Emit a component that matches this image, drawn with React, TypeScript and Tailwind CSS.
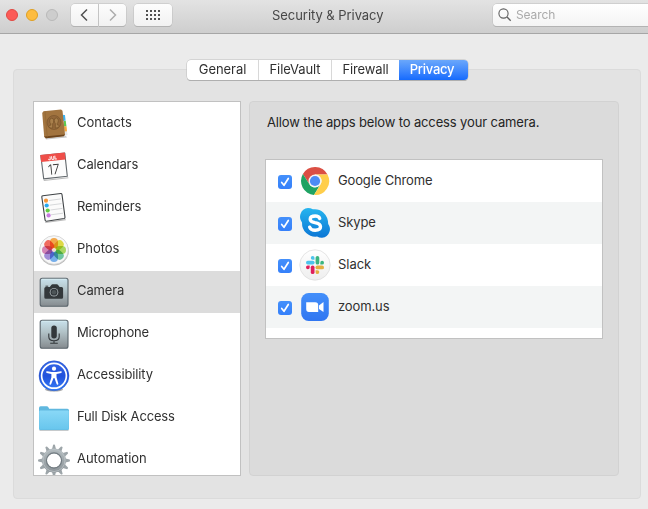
import React from "react";

type Item = { label: string; icon: React.ReactNode; tracking: string };

function Contacts() {
  return (
    <svg viewBox="0 0 32 32" className="size-8">
      <path d="M7 30 28 28 29 29.5 8 31.5z" fill="#c9c9c9" />
      <path d="M23 4 27 8 29.5 27 26 28z" fill="#e6e6e6" />
      <path d="M25 7h2l.5 5.5-2.500.500z" fill="#3fb4f2" />
      <path d="m26 13 1.700-.200.700 5.500-2.400.200z" fill="#5fc94e" />
      <path d="m26 18.500 2.400-.200.600 5-2.500.200z" fill="#f7a93d" />
      <path d="m4.200 5 1.300-1.800L23 1.500l1.500 1.300L27 26.500l-1.300 1.600L8 30.300 6.200 29z" fill="#a2743f" />
      <path d="m6.200 28.500 20.700-2-.9 1.700L8 30.300z" fill="#6d451d" />
      <path d="m7 3.200 2.300 26" stroke="#8f6431" strokeWidth=".6" />
      <circle cx="16" cy="14.500" r="7" fill="#94683a" stroke="#7d582e" strokeWidth=".8" />
      <g fill="#a9804c" stroke="#745027" strokeWidth=".7">
        <path d="M10.500 18.800q.5-1.300 2.300-1.700v-1.400q-1.200-1-1.100-3 .1-2.500 2-2.500t2 2.500q.1 2-1 3v4.500q-2.700-.1-4.200-1.400z" />
        <path d="M17.300 20.200v-4.800q-1.100-1-1-3 .1-2.500 2-2.500t2 2.500q.1 2-1 3v1.400q1.600.3 2.300 1.400-1.400 1.600-4.300 2z" />
      </g>
    </svg>
  );
}

function Calendar() {
  return (
    <svg viewBox="0 0 32 32" className="size-8">
      <path d="m5.500 30 24.700-2.700.3 1L6 31z" fill="#bbb" />
      <path d="m2.800 5.500 24-2.400 2.500 23.200-23.600 2.600z" fill="#fcfcfc" stroke="#62686c" strokeWidth="1.100" strokeLinejoin="round" />
      <path d="m2.300 4.900 24.500-2.500.8 7.200L3.100 12z" fill="#ef4e49" />
      <g transform="rotate(-6 16 16)" textAnchor="middle" fontFamily="Inter, sans-serif">
        <text x="15.500" y="9.700" fontSize="5" fontWeight="800" fill="#fff" textLength="9" lengthAdjust="spacingAndGlyphs">JUL</text>
        <text x="15.500" y="24.300" fontSize="14" fontWeight="300" fill="#343434" textLength="12" lengthAdjust="spacingAndGlyphs">17</text>
      </g>
    </svg>
  );
}

function Reminders() {
  return (
    <svg viewBox="0 0 32 32" className="size-8">
      <path d="m7 30 20.500-3 .3 1.200L7.500 31z" fill="#bbb" />
      <path d="M4.800 3.700 22.700 1.500q1.100-.100 1.300 1L27 25.200q.100 1.100-1 1.300L8.500 29.200q-1.200.1-1.400-1L3.800 5q-.1-1.100 1-1.300z" fill="#fbfbfb" stroke="#3f4346" strokeWidth="1.100" />
      <g stroke="#c6c9cb" strokeWidth=".7"><path d="m11 8.500 12-1.600M11.600 13.200l12-1.600M12.400 18l12-1.600M13 22.800l12-1.600" /></g>
      <circle cx="8" cy="8.700" r="2.100" fill="#f79536" /><circle cx="8.700" cy="13.500" r="2.100" fill="#28a9ef" /><circle cx="9.700" cy="18.500" r="2.100" fill="#63cd43" /><circle cx="10.600" cy="23.400" r="2.100" fill="#c77be0" />
    </svg>
  );
}

const petals: [number, string][] = [[0, "#f9a233"], [45, "#e2dc2d"], [90, "#a4d850"], [135, "#5fc49a"], [180, "#67aaf0"], [225, "#9a83d9"], [270, "#d576b0"], [315, "#f75a4c"]];

function Photos() {
  return (
    <svg viewBox="0 0 32 32" className="size-8">
      <ellipse cx="16" cy="17" rx="14.800" ry="14.600" fill="#bdbdbd" />
      <circle cx="16" cy="16" r="14.300" fill="#f7f7f7" stroke="#d0d0d0" strokeWidth=".8" />
      {petals.map(([a, c]) => (
        <rect key={a} x="12" y="4" width="8" height="10.400" rx="4" fill={c} fillOpacity=".88" transform={`rotate(${a} 16 16)`} style={{ mixBlendMode: "multiply" }} />
      ))}
      <circle cx="16" cy="16" r="1.700" fill="#f4d8cc" />
    </svg>
  );
}

function Tile({ children }: { children: React.ReactNode }) {
  return (
    <svg viewBox="0 0 32 32" className="size-8">
      <defs><linearGradient id="tile" x2="0" y2="1"><stop stopColor="#c9e2ed" /><stop offset=".4" stopColor="#b3c4c9" /><stop offset="1" stopColor="#858b8f" /></linearGradient></defs>
      <rect x="2.200" y="2.200" width="27.800" height="28" rx="2" fill="url(#tile)" stroke="#59646b" strokeWidth="1.100" />
      <path d="M4 3.300h24" stroke="#ddf1f7" strokeWidth=".6" />
      {children}
    </svg>
  );
}

function Camera() {
  return (
    <Tile>
      <path d="M7.500 11h4l1.500-2q.5-.7 1.300-.7h4.200q.8 0 1.300.7l1.500 2h2q1.500 0 1.500 1.500v8.700q0 1.500-1.500 1.500H7.500Q6 22.700 6 21.200v-8.700Q6 11 7.500 11z" transform="translate(.3 0)" fill="#33383b" />
      <path d="M7.500 9.700h2.700v1H7.500z" fill="#33383b" />
      <circle cx="16" cy="16.200" r="4.300" fill="#a0a9ad" /><circle cx="16" cy="16.200" r="3.400" fill="#30363a" /><circle cx="16" cy="16.200" r="2.300" fill="#4d5558" />
    </Tile>
  );
}

function Microphone() {
  return (
    <Tile>
      <rect x="13.300" y="7.400" width="5.500" height="13" rx="2.700" fill="#33383b" />
      <path d="M10.800 15.500v3.200q0 4 5.200 4t5.200-4v-3.200M16 22.700v2.400M12.200 25.300h7.600" fill="none" stroke="#33383b" strokeWidth="1.100" />
    </Tile>
  );
}

function Accessibility() {
  return (
    <svg viewBox="0 0 32 32" className="size-8">
      <defs><linearGradient id="access" x2="0" y2="1"><stop stopColor="#3668e7" /><stop offset=".5" stopColor="#2251dc" /><stop offset="1" stopColor="#347ef7" /></linearGradient></defs>
      <ellipse cx="16" cy="29.600" rx="9" ry="1.900" fill="#aaa" />
      <circle cx="16" cy="15.800" r="15" fill="url(#access)" stroke="#1b46bb" strokeWidth=".4" />
      <circle cx="16" cy="15.800" r="12.400" fill="none" stroke="#fff" strokeWidth="1.700" />
      <circle cx="16" cy="8.700" r="2.100" fill="#fff" />
      <path d="m9 11.300 4.800.6h4.400l4.800-.6q.8 0 .8.800 0 .7-.7.900l-4.600.9v3.400l1.800 6.300q.2.800-.5 1.100-.8.200-1.200-.6L16.400 18h-.8l-2.400 6.100q-.4.800-1.200.6-.7-.3-.5-1.100l1.900-6.300v-3.400L8.800 13q-.7-.2-.7-.9 0-.8.900-.8z" fill="#fff" />
    </svg>
  );
}

function Folder() {
  return (
    <svg viewBox="0 0 32 32" className="size-8">
      <defs><linearGradient id="folder" x2="0" y2="1"><stop stopColor="#89d8f7" /><stop offset="1" stopColor="#68c6ed" /></linearGradient></defs>
      <path d="M1.500 27.500h29v1.300h-29z" fill="#b8bdc0" />
      <path d="M1 6q0-1.700 1.600-1.700h6.200q1 0 1.600 1l.7 1.500h18.300Q31 6.800 31 8.400v18q0 1.500-1.500 1.500h-27Q1 27.900 1 26.400z" fill="#60b8df" />
      <path d="M1.200 9.500q0-1 1-1h27.600q1 0 1 1v16.700q0 1.200-1.200 1.200H2.400q-1.200 0-1.200-1.200z" fill="url(#folder)" />
    </svg>
  );
}

function Gear() {
  return (
    <svg viewBox="0 0 32 32" className="size-8 overflow-visible">
      <defs><linearGradient id="gear" gradientUnits="userSpaceOnUse" x1="0" y1="0" x2="0" y2="32"><stop stopColor="#b9c2c5" /><stop offset="1" stopColor="#888f94" /></linearGradient></defs>
      <g fill="#9da5a9">
        {Array.from({ length: 12 }, (_, i) => (
          <path key={i} d="M13.800 6 15.100.8q.9-.6 1.800 0L18.200 6z" transform={`rotate(${i * 30} 16 16.500)`} />
        ))}
      </g>
      <circle cx="16" cy="16.500" r="9.500" fill="none" stroke="url(#gear)" strokeWidth="5" />
      <circle cx="16" cy="16.500" r="11" fill="none" stroke="#bcc4c8" strokeWidth=".8" />
      <circle cx="16" cy="16.500" r="7.600" fill="none" stroke="#737c82" strokeWidth="1.100" />
    </svg>
  );
}

function Chrome() {
  return (
    <svg viewBox="0 0 32 32" className="size-8">
      <circle cx="16" cy="16" r="14" fill="#fff" />
      <path d="M16 9.500h12.500A14 14 0 0 0 3.900 9l6.500 10.200z" fill="#db4f44" />
      <path d="M3.900 9A14 14 0 0 0 15 30l6.500-10.700A6.500 6.500 0 0 1 10.400 19.200z" fill="#1fa363" />
      <path d="M15 30A14 14 0 0 0 28.500 9.500H16a6.500 6.500 0 0 1 5.500 9.900z" fill="#ffce4b" />
      <circle cx="16" cy="16" r="6.500" fill="#f5f5f5" /><circle cx="16" cy="16" r="5.100" fill="#4c8bf5" />
    </svg>
  );
}

function Skype() {
  return (
    <svg viewBox="0 0 32 32" className="size-8">
      <defs><linearGradient id="skype" x2="0" y2="1"><stop stopColor="#26b5ef" /><stop offset="1" stopColor="#0b76d5" /></linearGradient></defs>
      <path d="M9 1q2.600 0 4.800 1.300 6-.9 10.500 3.100 4.800 4.300 4.900 11.700Q32 21 30.400 25.100q-1.700 5.200-7.300 5.700-2.700.1-5-1.200-6.400.7-10.900-3.500-4.400-4.400-4.200-10.700Q0 11.500 1.400 7.200 3.400 1.300 9 1z" fill="url(#skype)" />
      <path d="M20.700 11.500Q19.900 9 16.200 9q-5 0-5 3.200 0 2.500 4.700 3.400 5.600.9 5.600 4.200 0 3.400-5.300 3.400-4.500 0-5.500-3" fill="none" stroke="#fff" strokeWidth="3.400" strokeLinecap="round" />
    </svg>
  );
}

function Slack() {
  return (
    <svg viewBox="0 0 32 32" className="size-8">
      <defs><linearGradient id="slack" x2="0" y2="1"><stop stopColor="#fff" /><stop offset="1" stopColor="#eee" /></linearGradient></defs>
      <circle cx="16" cy="16" r="15.200" fill="url(#slack)" stroke="#dadada" strokeWidth=".7" />
      <g fill="#4cc3ec"><rect x="7" y="11.700" width="8.600" height="3.700" rx="1.850" /><path d="M15.500 10.700h-1.800a1.850 1.850 0 1 1 1.800-1.850z" /></g>
      <g fill="#3bb580"><rect x="16.600" y="7" width="3.700" height="8.500" rx="1.850" /><path d="M21.300 15.500v-1.800a1.850 1.850 0 1 1 1.850 1.800z" /></g>
      <g fill="#e4ae40"><rect x="16.500" y="16.600" width="8.500" height="3.700" rx="1.850" /><path d="M16.600 21.300h1.800a1.850 1.850 0 1 1-1.800 1.850z" /></g>
      <g fill="#df1e5a"><rect x="11.800" y="16.500" width="3.700" height="8.500" rx="1.850" /><path d="M10.700 16.500v1.800a1.850 1.850 0 1 1-1.850-1.800z" /></g>
    </svg>
  );
}

function Zoom() {
  return (
    <svg viewBox="0 0 32 32" className="size-8">
      <defs><linearGradient id="zoom" x2="0" y2="1"><stop stopColor="#438ffa" /><stop offset="1" stopColor="#3176f1" /></linearGradient></defs>
      <rect x="2.200" y="2" width="27.600" height="28" rx="7.500" fill="url(#zoom)" />
      <path d="M7.200 11.200h9q3 0 3 3V21h-9.300q-2.700 0-2.700-3zM20 14.400l4.500-3.300v10L20 18z" fill="#fff" />
    </svg>
  );
}

const sidebar: Item[] = [
  { label: "Contacts", icon: <Contacts />, tracking: "tracking-[-0.03px]" },
  { label: "Calendars", icon: <Calendar />, tracking: "tracking-[-0.12px]" },
  { label: "Reminders", icon: <Reminders />, tracking: "tracking-[-0.12px]" },
  { label: "Photos", icon: <Photos />, tracking: "tracking-[-0.05px]" },
  { label: "Camera", icon: <Camera />, tracking: "tracking-[-0.12px]" },
  { label: "Microphone", icon: <Microphone />, tracking: "tracking-[-0.15px]" },
  { label: "Accessibility", icon: <Accessibility />, tracking: "tracking-[-0.12px]" },
  { label: "Full Disk Access", icon: <Folder />, tracking: "tracking-[-0.15px]" },
  { label: "Automation", icon: <Gear />, tracking: "tracking-[-0.05px]" },
];

const apps: Item[] = [
  { label: "Google Chrome", icon: <Chrome />, tracking: "tracking-[-0.14px]" },
  { label: "Skype", icon: <Skype />, tracking: "tracking-[-0.12px]" },
  { label: "Slack", icon: <Slack />, tracking: "tracking-[-0.05px]" },
  { label: "zoom.us", icon: <Zoom />, tracking: "tracking-[-0.12px]" },
];

function Checkbox() {
  return (
    <span className="mt-[2px] flex size-[14px] items-center justify-center rounded-[3px] bg-gradient-to-b from-[#4490fb] to-[#3580fa]">
      <svg viewBox="0 0 14 14" className="size-[14px]"><path d="m3.700 7.500 2.300 2.800 4.300-6.800" fill="none" stroke="#fff" strokeWidth="1.700" strokeLinecap="round" strokeLinejoin="round" /></svg>
    </span>
  );
}

const button = "flex h-[22px] shrink-0 items-center justify-center bg-gradient-to-b from-[#fdfdfd] to-[#f2f2f2] shadow-[0_0_0_0.5px_#bdbdbd,0_1px_0.5px_#a9a9a9]";

export default function App() {
  return (
    <div className="flex h-[509px] w-[648px] flex-col overflow-hidden bg-[#ebebeb] font-['Inter','Liberation_Sans',sans-serif] text-[13px] leading-4 text-[#303030]">
      <header className="flex h-[34px] shrink-0 items-start border-b border-[#a6a6a6] bg-gradient-to-b from-[#e3e3e3] to-[#cecece] pt-[4px] pl-[6px]">
        <div className="flex h-[22px] shrink-0 items-center gap-2">
          <span className="size-3 rounded-full border border-[#e14942] bg-[#fc5b57]" />
          <span className="size-3 rounded-full border border-[#dfa023] bg-[#fdbc40]" />
          <span className="size-3 rounded-full border border-[#b9b9b9] bg-[#cdcdcd]" />
        </div>
        <div className="ml-[13px] flex shrink-0 gap-px">
          <div className={`${button} w-[27px] rounded-l-[4px]`}><svg viewBox="0 0 27 22" className="h-[22px] w-[27px]"><path d="m16 5.500-5.500 5.500 5.500 5.500" fill="none" stroke="#505050" strokeWidth="1.500" /></svg></div>
          <div className={`${button} w-[27px] rounded-r-[4px]`}><svg viewBox="0 0 27 22" className="h-[22px] w-[27px]"><path d="m11 5.500 5.500 5.500-5.500 5.500" fill="none" stroke="#adadad" strokeWidth="1.500" /></svg></div>
        </div>
        <div className={`${button} ml-2 w-[38px] rounded-[4px]`}>
          <div className="grid grid-cols-4 gap-[2px]">{Array.from({ length: 12 }, (_, i) => <span key={i} className="size-[2px] bg-[#515151]" />)}</div>
        </div>
        <div className="ml-[100px] w-[220px] shrink-0 pt-[3px] text-[13px] tracking-[-0.05px] whitespace-nowrap text-[#474747]">Security &amp; Privacy</div>
        <div className="ml-px flex h-[22px] w-[175px] shrink-0 items-center rounded-[4px] bg-gradient-to-b from-white to-[#f4f4f4] pl-[5px] text-[#aaa] shadow-[0_0_0_0.5px_#bdbdbd,0_1px_0.5px_#a9a9a9]">
          <svg viewBox="0 0 14 14" className="mr-[4px] size-[14px]"><circle cx="5.500" cy="5.500" r="4.600" fill="none" stroke="#606060" strokeWidth="1.100" /><path d="m9 9 3.700 3.700" stroke="#606060" strokeWidth="1.300" /></svg>
          <span className="text-[12px] tracking-[-0.1px]">Search</span>
        </div>
      </header>

      <main className="mt-[35px] ml-[13px] flex h-[430px] w-[628px] flex-col rounded-[4px] border border-[#dbdbdb] bg-[#e3e3e3]">
        <nav className="-mt-[10px] ml-[173px] flex h-[20px] w-[281px] shrink-0 overflow-hidden rounded-[4px] bg-white shadow-[0_0_0_0.5px_#bdbdbd,0_1px_0.5px_#a0a0a0]">
          <div className="flex w-[72px] items-center justify-center border-r border-[#d8d8d8] pb-[2px] tracking-[-0.05px]">General</div>
          <div className="flex w-[73px] items-center justify-center border-r border-[#d8d8d8] pb-[2px] tracking-[-0.1px]">FileVault</div>
          <div className="flex w-[67px] items-center justify-center pb-[2px] tracking-[-0.15px]">Firewall</div>
          <div className="flex flex-1 items-center justify-center bg-gradient-to-b from-[#6aa7fb] to-[#146afd] pr-[3px] pb-[2px] font-medium tracking-[-0.25px] text-white">Privacy</div>
        </nav>
        <div className="mt-[21px] ml-[19px] flex gap-2">
          <aside className="h-[375px] w-[208px] overflow-hidden border border-[#c1c1c1] bg-white pt-px">
            {sidebar.map((item) => (
              <div key={item.label} className={`flex h-[42px] items-center pl-[4px] ${item.label === "Camera" ? "bg-[#dcdcdc]" : ""}`}>
                {item.icon}<span className={`-mt-[4px] ml-[7px] whitespace-nowrap ${item.tracking}`}>{item.label}</span>
              </div>
            ))}
          </aside>
          <section className="h-[375px] w-[370px] rounded-[4px] border border-[#d2d2d2] bg-[#dbdbdb] pt-[12px] pl-[15px]">
            <p className="pl-[2px] tracking-[-0.135px] whitespace-nowrap text-[#242424]">Allow the apps below to access your camera.</p>
            <div className="mt-[29px] h-[180px] w-[338px] border border-[#c1c1c1] bg-white">
              {apps.map((item) => (
                <div key={item.label} className="flex h-[42px] items-center pl-[12px] even:bg-[#f3f5f5]">
                  <Checkbox /><span className="ml-[7px]">{item.icon}</span><span className={`-mt-[2px] ml-[7px] whitespace-nowrap ${item.tracking}`}>{item.label}</span>
                </div>
              ))}
            </div>
          </section>
        </div>
      </main>
    </div>
  );
}
